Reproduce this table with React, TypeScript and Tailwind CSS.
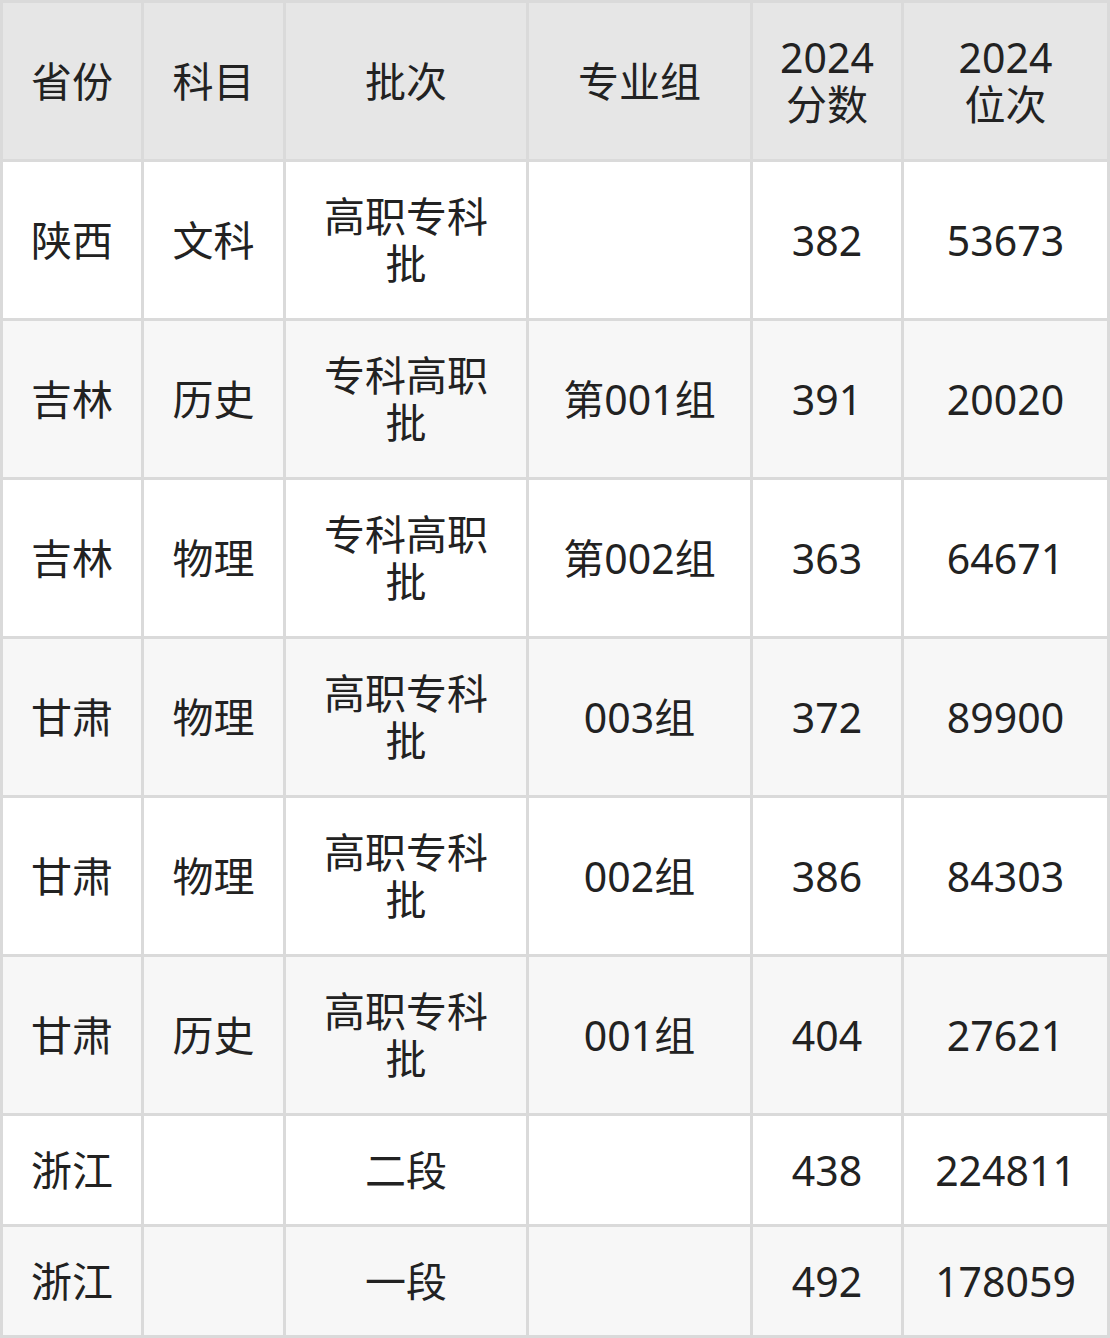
import React from "react";

const header: React.ReactNode[] = [
  "省份",
  "科目",
  "批次",
  "专业组",
  <>2024<br />分数</>,
  <>2024<br />位次</>,
];
const rows: string[][] = [
  ["陕西", "文科", "高职专科批", "", "382", "53673"],
  ["吉林", "历史", "专科高职批", "第001组", "391", "20020"],
  ["吉林", "物理", "专科高职批", "第002组", "363", "64671"],
  ["甘肃", "物理", "高职专科批", "003组", "372", "89900"],
  ["甘肃", "物理", "高职专科批", "002组", "386", "84303"],
  ["甘肃", "历史", "高职专科批", "001组", "404", "27621"],
  ["浙江", "", "二段", "", "438", "224811"],
  ["浙江", "", "一段", "", "492", "178059"],
];

export default function App() {
  return (
    <div
      className="w-[1110px] h-[1338px] bg-[#dadada] p-[3px] grid gap-[3px] grid-cols-[138px_139px_240px_221px_148px_203px] grid-rows-[156px_156px_156px_156px_156px_156px_156px_108px_108px] text-[#222222] text-[41px] leading-[47px]"
      style={{ fontFamily: '"Noto Sans", "Noto Sans CJK SC", sans-serif' }}
    >
      {header.map((h, i) => (
        <div
          key={"h" + i}
          className="bg-[#e6e6e6] flex items-center justify-center text-center px-[4px]"
        >
          <div>{h}</div>
        </div>
      ))}
      {rows.map((r, ri) =>
        r.map((c, ci) => (
          <div
            key={ri + "-" + ci}
            className={
              (ri % 2 === 0 ? "bg-white" : "bg-[#f7f7f7]") +
              " flex items-center justify-center text-center px-[20px]"
            }
          >
            <div>{c}</div>
          </div>
        ))
      )}
    </div>
  );
}
